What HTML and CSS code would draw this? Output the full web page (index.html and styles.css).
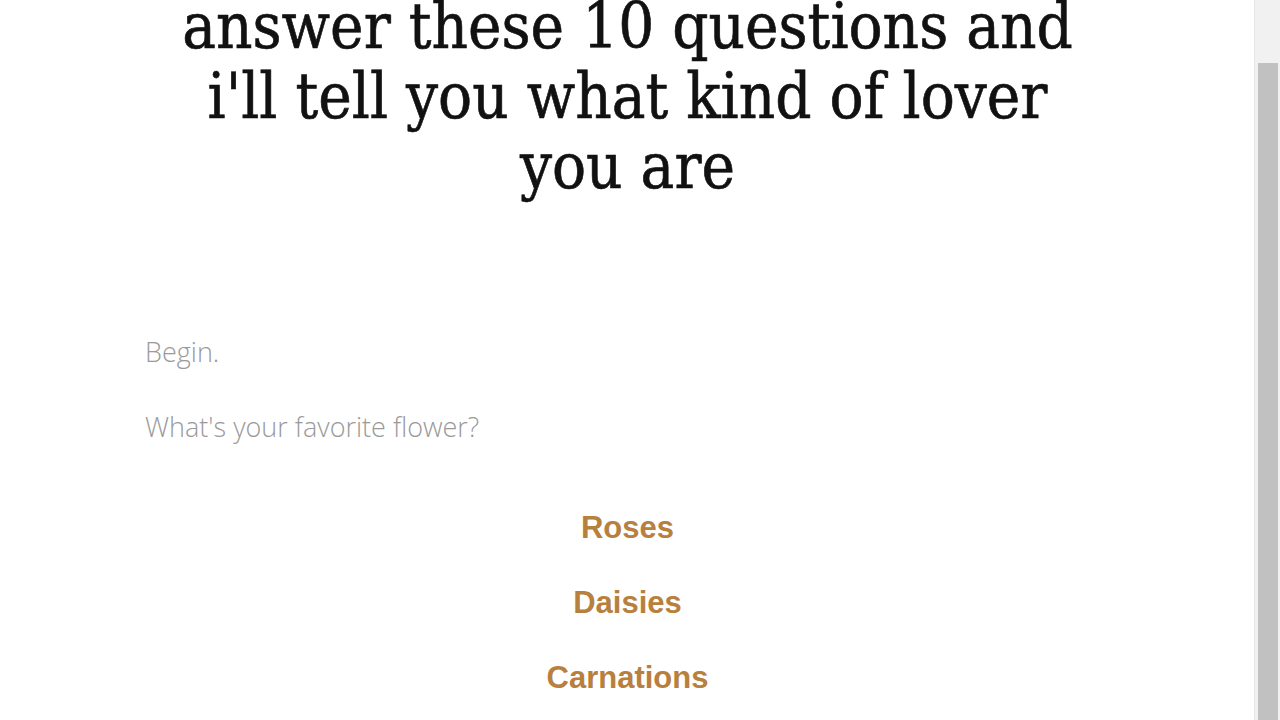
FILE: index.html
```html
<!DOCTYPE html>
<html lang="en">
<head>
    <meta charset="utf-8">
    <title>answer these 10 questions and i'll tell you what kind of lover you are</title>
    <link rel="stylesheet" href="styles.css">
</head>
<body>
    <div class="page">
        <h1 class="title">answer these 10 questions and i'll tell you what kind of lover you are</h1>
        <div class="quiz">
            <p class="intro">Begin.</p>
            <p class="question">What's your favorite flower?</p>
            <ul class="answers">
                <li><a class="answer">Roses</a></li>
                <li><a class="answer">Daisies</a></li>
                <li><a class="answer">Carnations</a></li>
            </ul>
        </div>
    </div>
    <div class="scrollbar"><div class="thumb"></div></div>
</body>
</html>
```

FILE: styles.css
```css
html, body { margin: 0; height: 100%; overflow: hidden; background: #fff; }
.page { width: 1255px; margin-top: -8px; }
.title { font-family: "DejaVu Serif", serif; font-stretch: condensed; font-weight: normal; font-size: 63px; line-height: 70px; text-align: center; color: #111; -webkit-text-stroke: 0.6px #111; margin: 0 auto; width: 900px; }
.quiz { padding: 135px 145px 0; }
.intro, .question { font-family: "Open Sans", sans-serif; font-weight: 300; font-size: 27px; line-height: 30px; color: #9a9a9a; margin: 0 0 45px; }
.answers { list-style: none; margin: 0; padding: 26px 0 0; text-align: center; }
.answers li { line-height: 30px; margin-bottom: 45px; }
.answers li + li { margin-top: -5px; }
.answer { font-family: "Liberation Sans", Arial, sans-serif; font-weight: bold; font-size: 31px; color: #b8803e; cursor: pointer; }
.scrollbar { position: fixed; top: 0; right: 0; width: 25px; height: 100%; background: #f1f1f1; border-left: 1px solid #e8e8e8; }
.scrollbar .thumb { margin: 63px 2px 0 3px; height: 700px; background: #c1c1c1; }
```
